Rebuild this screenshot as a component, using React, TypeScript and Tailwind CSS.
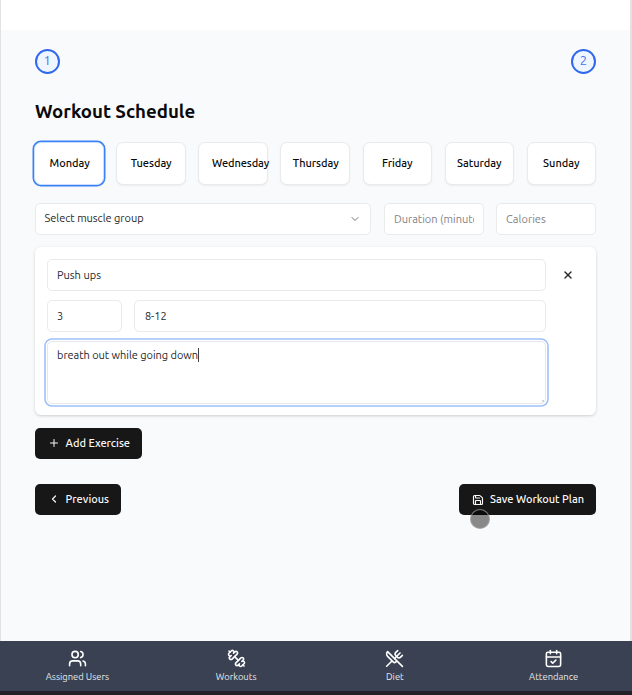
import { CalendarCheck, ChevronDown, ChevronLeft, Plus, Save, Users, UtensilsCrossed, X } from "lucide-react";
import type { ReactNode } from "react";

const days = ["Monday", "Tuesday", "Wednesday", "Thursday", "Friday", "Saturday", "Sunday"];

function DumbbellIcon({ className = "" }: { className?: string }) {
  return (
    <svg className={className} viewBox="0 0 24 24" fill="none" stroke="currentColor" strokeWidth="2" strokeLinecap="round" strokeLinejoin="round">
      <path d="M14.4 14.4 9.6 9.6" />
      <path d="M18.657 21.485a2 2 0 1 1-2.829-2.828l-1.767 1.768a2 2 0 1 1-2.829-2.829l6.364-6.364a2 2 0 1 1 2.829 2.829l-1.768 1.767a2 2 0 1 1 2.828 2.829z" />
      <path d="m21.5 21.5-1.4-1.4" />
      <path d="M3.9 3.9 2.5 2.5" />
      <path d="M6.404 12.768a2 2 0 1 1-2.829-2.829l1.768-1.767a2 2 0 1 1-2.828-2.829l2.828-2.828a2 2 0 1 1 2.829 2.828l1.767-1.768a2 2 0 1 1 2.829 2.829z" />
    </svg>
  );
}

const tabs = [
  { label: "Assigned Users", Icon: Users },
  { label: "Workouts", Icon: DumbbellIcon },
  { label: "Diet", Icon: UtensilsCrossed },
  { label: "Attendance", Icon: CalendarCheck },
];

function Step({ children }: { children: ReactNode }) {
  return (
    <div className="flex size-[25px] items-center justify-center rounded-full border-[2px] border-[#2f68ec] bg-[#eff6ff] pb-[2px] text-[13px] leading-none text-[#3f74ec]">
      {children}
    </div>
  );
}

function Field({ children, className = "" }: { children: ReactNode; className?: string }) {
  return (
    <div className={`flex h-8 items-center overflow-hidden rounded-[5px] border border-[#e9eaeb] bg-white px-[9px] whitespace-nowrap ${className}`}>
      {children}
    </div>
  );
}

function Button({ children, className = "" }: { children: ReactNode; className?: string }) {
  return (
    <button className={`flex h-[31px] items-center rounded-[5px] bg-[#171717] pb-px pl-[13px] text-[11px] font-medium whitespace-nowrap text-neutral-50 ${className}`}>
      {children}
    </button>
  );
}

export default function App() {
  return (
    <div className="flex h-[695px] w-[632px] flex-col overflow-hidden bg-[#f9fafc] font-['Ubuntu','Noto_Sans',sans-serif] text-[11px] text-[#27272a]">
      <div className="flex h-[641px] flex-col border-r-2 border-l border-r-[#e2e2e3] border-l-[#e2e2e3]">
        <header className="h-[30px] shrink-0 bg-white" />
        <main className="pt-[19px] pr-[34px] pl-[33.6px]">
          <div className="flex justify-between">
            <Step>1</Step>
            <Step>2</Step>
          </div>

          <h1 className="mt-[25px] h-[27px] pl-[0.4px] text-[18.65px] leading-[26px] font-semibold text-[#09090b]">Workout Schedule</h1>

          <div className="mt-[16px] -ml-[0.2px] grid grid-cols-7 gap-[12.6px]">
            {days.map((day, i) => (
              <div
                key={day}
                className={`flex h-[43px] min-w-0 items-center rounded-[7px] border bg-white px-3 pb-px text-[11px] font-medium text-[#09090b] shadow-[0_1px_2px_rgba(0,0,0,0.06)] ${
                  i === 0 ? "border-[#c9dcfb] ring-[1.5px] ring-[#3b82f6]" : "border-[#e9eaeb]"
                } ${i === 2 ? "justify-start pl-[12.6px] tracking-[-0.1px]" : "justify-center tracking-[-0.02px]"}`}
              >
                <span className={i === 0 || i === 3 ? "translate-x-[0.6px]" : ""}>{day}</span>
              </div>
            ))}
          </div>

          <div className="mt-[18px] flex justify-between">
            <Field className="w-[336.8px] justify-between pb-[2px]">
              <span className="tracking-[-0.03px]">Select muscle group</span>
              <ChevronDown className="mt-[2px] size-3 text-[#71717a]" />
            </Field>
            <div className="flex gap-3">
              <Field className="w-[100px] text-[#828287]">
                <span className="w-full overflow-hidden">Duration (minutes)</span>
              </Field>
              <Field className="w-[100px] text-[#828287]">
                <span className="tracking-[0.05px]">Calories</span>
              </Field>
            </div>
          </div>

          <section className="mt-3 flex h-[168px] rounded-[6px] bg-white pt-3 pl-[12.4px] shadow-[0_1px_3px_rgba(0,0,0,0.18)]">
            <div className="w-[499.4px] shrink-0">
              <Field>Push ups</Field>
              <div className="mt-[9px] flex justify-between">
                <Field className="w-[75px]">3</Field>
                <Field className="w-[412px] pl-[9.5px]">8-12</Field>
              </div>
              <div className="mt-[9px] flex h-[63px] items-start rounded-[5px] border border-[#e7e8ea] bg-white px-[9px] pt-[5px] ring-[1.6px] ring-[#9fc0fa] ring-offset-[1.2px]">
                <span className="leading-4 tracking-[-0.04px]">breath out while going down</span>
                <span className="mt-px -ml-[0.5px] h-[14px] w-px bg-zinc-700" />
                <span className="-mr-[8px] mb-px ml-auto size-[2px] self-end bg-zinc-300" />
              </div>
            </div>
            <X className="mt-[10px] ml-[15.6px] size-3 text-[#27272a]" strokeWidth={2.8} />
          </section>

          <Button className="mt-[13px] w-[107.4px]">
            <Plus className="mr-[6px] size-3" />
            <span className="tracking-[-0.02px]">Add Exercise</span>
          </Button>

          <div className="mt-[25px] flex justify-between">
            <Button className="w-[86.4px]">
              <ChevronLeft className="mr-[6px] size-3" strokeWidth={2.4} />
              Previous
            </Button>
            <Button className="relative w-[137px]">
              <Save className="mr-[6.5px] -ml-[0.5px] size-3 translate-y-px" strokeWidth={2.3} />
              <span className="tracking-[-0.02px]">Save Workout Plan</span>
              <span className="absolute top-[25px] left-[11px] size-[19.5px] rounded-full border border-[#aaa]/70 bg-black/45" />
            </Button>
          </div>
        </main>
      </div>
      <nav className="shrink-0 bg-[#394152]">
        <div className="-ml-[2px] grid h-[50px] w-[635px] grid-cols-4">
          {tabs.map(({ label, Icon }) => (
            <div key={label} className="flex flex-col items-center pt-[8px] text-white">
              <Icon className="size-[19px]" />
              <span className="mt-[2px] text-[9.4px] leading-[13px] text-gray-200">{label}</span>
            </div>
          ))}
        </div>
      </nav>
      <footer className="h-1 bg-[#242129]" />
    </div>
  );
}
